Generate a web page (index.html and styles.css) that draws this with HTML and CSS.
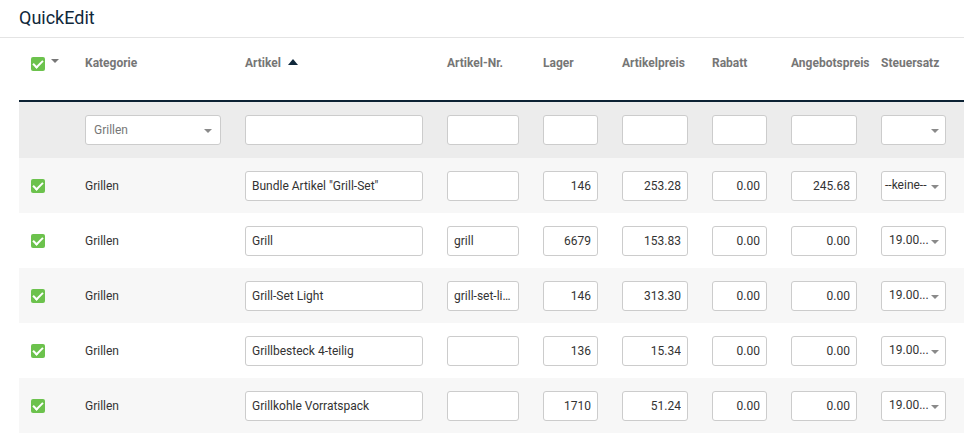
FILE: index.html
```html
<!DOCTYPE html>
<html lang="de">
<head>
    <meta charset="UTF-8">
    <meta name="viewport" content="width=device-width, initial-scale=1.0">
    <title>QuickEdit</title>
    <link rel="stylesheet" href="styles.css">
</head>
<body>
    <h1 class="page-title">QuickEdit</h1>

    <table class="quickedit">
        <colgroup>
            <col class="col-check">
            <col class="col-cat">
            <col class="col-name">
            <col class="col-nr">
            <col class="col-stock">
            <col class="col-price">
            <col class="col-discount">
            <col class="col-offer">
            <col class="col-tax">
        </colgroup>
        <thead>
            <tr class="head-row">
                <th><span class="check"></span><span class="caret-down head-caret"></span></th>
                <th>Kategorie</th>
                <th>Artikel <span class="sort-up"></span></th>
                <th>Artikel-Nr.</th>
                <th>Lager</th>
                <th>Artikelpreis</th>
                <th>Rabatt</th>
                <th>Angebotspreis</th>
                <th>Steuersatz</th>
            </tr>
            <tr class="filter-row">
                <td></td>
                <td><div class="select placeholder">Grillen<span class="caret-down"></span></div></td>
                <td><input type="text" class="field"></td>
                <td><input type="text" class="field"></td>
                <td><input type="text" class="field"></td>
                <td><input type="text" class="field"></td>
                <td><input type="text" class="field"></td>
                <td><input type="text" class="field"></td>
                <td><div class="select tax">&nbsp;<span class="caret-down"></span></div></td>
            </tr>
        </thead>
        <tbody>
            <tr>
                <td><span class="check"></span></td>
                <td>Grillen</td>
                <td><input type="text" class="field" value='Bundle Artikel "Grill-Set"'></td>
                <td><input type="text" class="field" value=""></td>
                <td><input type="text" class="field num" value="146"></td>
                <td><input type="text" class="field num" value="253.28"></td>
                <td><input type="text" class="field num" value="0.00"></td>
                <td><input type="text" class="field num" value="245.68"></td>
                <td><div class="select tax keine">--keine--<span class="caret-down"></span></div></td>
            </tr>
            <tr>
                <td><span class="check"></span></td>
                <td>Grillen</td>
                <td><input type="text" class="field" value="Grill"></td>
                <td><input type="text" class="field" value="grill"></td>
                <td><input type="text" class="field num" value="6679"></td>
                <td><input type="text" class="field num" value="153.83"></td>
                <td><input type="text" class="field num" value="0.00"></td>
                <td><input type="text" class="field num" value="0.00"></td>
                <td><div class="select tax">19.00...<span class="caret-down"></span></div></td>
            </tr>
            <tr>
                <td><span class="check"></span></td>
                <td>Grillen</td>
                <td><input type="text" class="field" value="Grill-Set Light"></td>
                <td><input type="text" class="field" value="grill-set-light"></td>
                <td><input type="text" class="field num" value="146"></td>
                <td><input type="text" class="field num" value="313.30"></td>
                <td><input type="text" class="field num" value="0.00"></td>
                <td><input type="text" class="field num" value="0.00"></td>
                <td><div class="select tax">19.00...<span class="caret-down"></span></div></td>
            </tr>
            <tr>
                <td><span class="check"></span></td>
                <td>Grillen</td>
                <td><input type="text" class="field" value="Grillbesteck 4-teilig"></td>
                <td><input type="text" class="field" value=""></td>
                <td><input type="text" class="field num" value="136"></td>
                <td><input type="text" class="field num" value="15.34"></td>
                <td><input type="text" class="field num" value="0.00"></td>
                <td><input type="text" class="field num" value="0.00"></td>
                <td><div class="select tax">19.00...<span class="caret-down"></span></div></td>
            </tr>
            <tr>
                <td><span class="check"></span></td>
                <td>Grillen</td>
                <td><input type="text" class="field" value="Grillkohle Vorratspack"></td>
                <td><input type="text" class="field" value=""></td>
                <td><input type="text" class="field num" value="1710"></td>
                <td><input type="text" class="field num" value="51.24"></td>
                <td><input type="text" class="field num" value="0.00"></td>
                <td><input type="text" class="field num" value="0.00"></td>
                <td><div class="select tax">19.00...<span class="caret-down"></span></div></td>
            </tr>
        </tbody>
    </table>
</body>
</html>
```

FILE: styles.css
```css
body {
    margin: 0;
    font-family: Roboto, "Liberation Sans", sans-serif;
    color: #333;
    background: #fff;
}
.page-title {
    margin: 0;
    padding: 7px 19px 9px;
    font-size: 18px;
    line-height: 21px;
    font-weight: 400;
    color: #10283b;
    border-bottom: 1px solid #e4e4e4;
}
.quickedit {
    margin-left: 19px;
    width: 945px;
    border-collapse: collapse;
    table-layout: fixed;
}
.col-check { width: 54px; }
.col-cat { width: 160px; }
.col-name { width: 202px; }
.col-nr { width: 96px; }
.col-stock { width: 79px; }
.col-price { width: 90px; }
.col-discount { width: 79px; }
.col-offer { width: 90px; }
.col-tax { width: 95px; }

th, td {
    padding: 0 12px;
    text-align: left;
    font-size: 12px;
}
.head-row th {
    padding-top: 17px;
    padding-bottom: 29px;
    line-height: 16px;
    font-weight: 700;
    color: #767676;
    vertical-align: top;
    border-bottom: 2px solid #0c2234;
    white-space: nowrap;
}
.filter-row td {
    background: #ececec;
    height: 56px;
    padding-top: 0;
    padding-bottom: 0;
}
tbody tr td {
    height: 55px;
    vertical-align: middle;
}
tbody tr:nth-child(odd) td {
    background: #f7f7f7;
}
.check {
    display: inline-block;
    width: 14px;
    height: 14px;
    border-radius: 2px;
    background: #6cc24d;
    vertical-align: middle;
    position: relative;
}
.check::after {
    content: "";
    position: absolute;
    left: 4px;
    top: 1px;
    width: 4px;
    height: 8px;
    border: solid #fff;
    border-width: 0 2px 2px 0;
    transform: rotate(45deg);
}
.caret-down {
    display: inline-block;
    width: 0;
    height: 0;
    border-left: 4px solid transparent;
    border-right: 4px solid transparent;
    border-top: 4px solid #8a8a8a;
}
.head-caret {
    margin-left: 6px;
    vertical-align: middle;
    border-top-color: #777;
    position: relative;
    top: -3px;
}
.sort-up {
    display: inline-block;
    width: 0;
    height: 0;
    margin-left: 4px;
    border-left: 5px solid transparent;
    border-right: 5px solid transparent;
    border-bottom: 6px solid #10283b;
    vertical-align: middle;
    position: relative;
    top: -2px;
}
.field, .select {
    display: block;
    box-sizing: border-box;
    width: 100%;
    height: 30px;
    margin: 0;
    padding: 0 6px;
    border: 1px solid #cccccc;
    border-radius: 3px;
    background: #fff;
    font-family: Roboto, "Liberation Sans", sans-serif;
    font-size: 12px;
    color: #333;
    outline: none;
    text-overflow: ellipsis;
}
.field.num {
    text-align: right;
}
.select {
    position: relative;
    line-height: 28px;
    padding-right: 20px;
    white-space: nowrap;
    overflow: hidden;
}
.select .caret-down {
    position: absolute;
    right: 8px;
    top: 13px;
}
.select.placeholder {
    color: #777;
    padding-left: 8px;
}
.select.tax {
    width: 65px;
    padding-left: 7px;
    padding-right: 0;
    line-height: 26px;
}
.select.tax.keine {
    padding-left: 3px;
}
.select.tax .caret-down {
    right: 6px;
}
```
